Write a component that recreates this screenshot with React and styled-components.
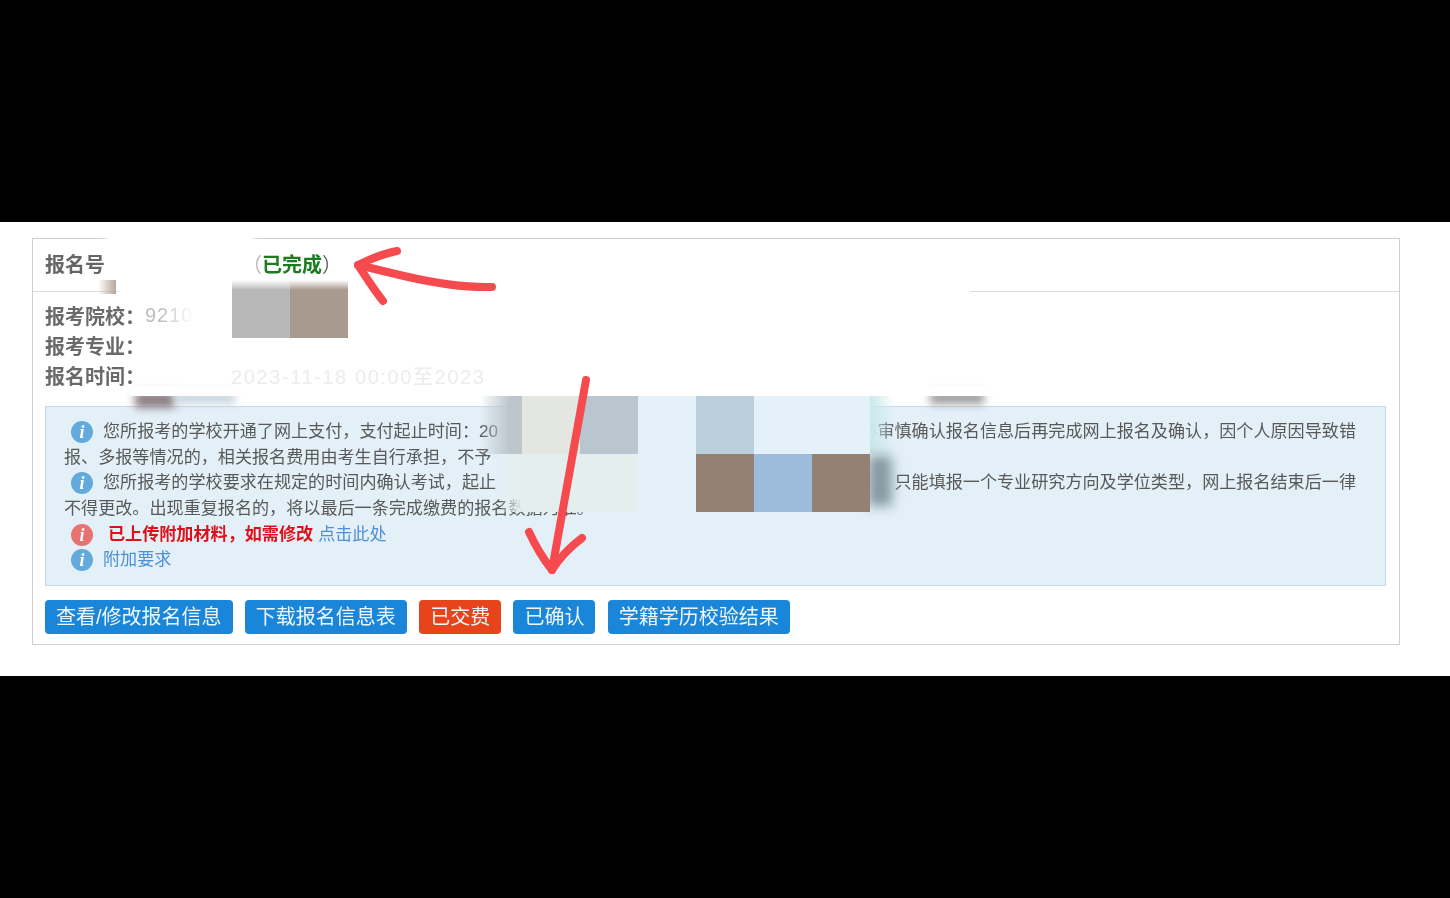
import React from 'react';
import styled, { createGlobalStyle } from 'styled-components';

const GlobalStyle = createGlobalStyle`
  html, body { margin: 0; padding: 0; background: #000; }
  body { font-family: "Liberation Sans", "Noto Sans CJK SC", sans-serif; }
`;

const Page = styled.div`
  width: 1450px;
  height: 898px;
  overflow: hidden;
  background: #000;
  display: flex;
  flex-direction: column;
  justify-content: center;
`;

const Sheet = styled.div`
  position: relative;
  height: 454px;
  background: #fff;
  padding: 16px 50px 0 32px;
  box-sizing: border-box;
  overflow: hidden;
`;

const Panel = styled.section`
  height: 407px;
  box-sizing: border-box;
  border: 1px solid #cfcfcf;
  filter: blur(0.35px);
`;

const Header = styled.header`
  height: 52px;
  box-sizing: border-box;
  padding: 0 12px 4px;
  display: flex;
  align-items: center;
  justify-content: space-between;
  width: 321px;
  font-size: 20px;
  font-weight: 700;
  color: #666;
`;

const HeaderRule = styled.div`
  height: 1px;
  background: #dcdcdc;
`;

const Done = styled.span`
  color: #b5b5b5;
  font-weight: 400;
  b { color: #1b7d1f; font-weight: 700; }
  em { color: #666; font-style: normal; }
`;

const Body = styled.div`
  padding: 8px 13px 0 12px;
`;

const Meta = styled.div`
  display: flex;
  height: 30px;
  align-items: center;
  font-size: 20px;
  font-weight: 700;
  color: #6a6a6a;
`;

const MetaValue = styled.span`
  font-weight: 400;
  color: #bdbdbd;
  letter-spacing: 1px;
  mask-image: linear-gradient(to right, #000 30%, transparent);
`;

const FaintValue = styled.span`
  margin-left: 86px;
  font-weight: 400;
  color: #ececec;
  letter-spacing: 1.6px;
`;

const Notice = styled.div`
  margin-top: 16px;
  height: 180px;
  box-sizing: border-box;
  padding: 12px 29px 0 18px;
  background: #e3f0f7;
  border: 1px solid #bfdde8;
  font-size: 17.1px;
  line-height: 25.7px;
  color: #595959;
`;

const Line = styled.div`
  display: flex;
  align-items: center;
  justify-content: space-between;
  white-space: nowrap;
  height: 25.7px;
`;

const Lead = styled.span`
  display: flex;
  align-items: center;
  padding-left: 7px;
`;

const InfoIcon = styled.i`
  width: 22px;
  height: 22px;
  margin-right: ${p => p.$gap || 10}px;
  border-radius: 50%;
  background: ${p => (p.$danger ? '#e87272' : '#62aadb')};
  color: #fff;
  font: italic 700 18px/22px "Liberation Serif", serif;
  text-align: center;
`;

const Fading = styled.span`
  opacity: 0.35;
`;

const Warning = styled.strong`
  color: #e0101a;
  font-weight: 700;
  margin-right: 5px;
`;

const TextLink = styled.a`
  color: #4f8fd6;
`;

const Actions = styled.div`
  margin-top: 14px;
  display: flex;
  gap: 12.3px;
`;

const Button = styled.button`
  height: 34px;
  padding: 0 11px 4px;
  border: 0;
  border-radius: 4px;
  background: ${p => (p.$paid ? '#e8441c' : '#1a86d9')};
  color: #eef6fc;
  font-family: inherit;
  font-size: 20px;
  white-space: nowrap;
`;

/* redaction patches lying over the screenshot */
const Patch = styled.div`
  position: absolute;
  left: ${p => p.$x}px;
  top: ${p => p.$y}px;
  width: ${p => p.$w}px;
  height: ${p => p.$h}px;
  background: ${p => p.$c || '#fff'};
  filter: ${p => (p.$blur ? `blur(${p.$blur}px)` : 'none')};
`;

const Mosaic = styled.div`
  position: absolute;
  left: ${p => p.$x}px;
  top: ${p => p.$y}px;
  display: grid;
  grid-template-columns: repeat(${p => p.$cols}, 58px);
  grid-auto-rows: 58px;
`;

const Cell = styled.div`
  background: ${p => p.$c};
`;

const Strokes = styled.svg`
  position: absolute;
  left: 0;
  top: 0;
  width: 1450px;
  height: 454px;
`;

const HEAD_CELLS = ['#b9b8b8', '#a99a90'];

const MAIN_CELLS = [
  '#e4e6e2', '#b9c6d0', '#e3f0f7', '#bccfdc', '#e4f1f8', '#e4f1f8',
  '#e4eeec', '#e4eeec', 'transparent', '#958074', '#9dbcdc', '#958074',
];

const App = () => (
  <Page>
    <GlobalStyle />
    <Sheet>
      <Panel>
        <Header>
          <span>报名号</span>
          <Done>（<b>已完成</b><em>）</em></Done>
        </Header>
        <HeaderRule />
        <Body>
          <Meta>报考院校：<MetaValue>9210</MetaValue></Meta>
          <Meta>报考专业：</Meta>
          <Meta>报名时间：<FaintValue>2023-11-18 00:00至2023</FaintValue></Meta>
          <Notice>
            <Line>
              <Lead><InfoIcon>i</InfoIcon>您所报考的学校开通了网上支付，支付起止时间：20</Lead>
              <span><Fading>必</Fading>审慎确认报名信息后再完成网上报名及确认，因个人原因导致错</span>
            </Line>
            <Line>
              <span>报、多报等情况的，相关报名费用由考生自行承担，不予</span>
            </Line>
            <Line>
              <Lead><InfoIcon>i</InfoIcon>您所报考的学校要求在规定的时间内确认考试，起止</Lead>
              <span>只能填报一个专业研究方向及学位类型，网上报名结束后一律</span>
            </Line>
            <Line>
              <span>不得更改。出现重复报名的，将以最后一条完成缴费的报名数据为准。</span>
            </Line>
            <Line>
              <Lead>
                <InfoIcon $danger $gap={15}>i</InfoIcon>
                <Warning>已上传附加材料，如需修改</Warning>
                <TextLink>点击此处</TextLink>
              </Lead>
            </Line>
            <Line>
              <Lead><InfoIcon>i</InfoIcon><TextLink>附加要求</TextLink></Lead>
            </Line>
          </Notice>
          <Actions>
            <Button>查看/修改报名信息</Button>
            <Button>下载报名信息表</Button>
            <Button $paid>已交费</Button>
            <Button>已确认</Button>
            <Button>学籍学历校验结果</Button>
          </Actions>
        </Body>
      </Panel>

      <Patch $x={135} $y={170} $w={40} $h={16} $c="#8d7f86" $blur={4} />
      <Patch $x={175} $y={170} $w={60} $h={12} $c="#c7d5df" $blur={4} />
      <Patch $x={930} $y={170} $w={54} $h={12} $c="#9a9a9a" $blur={4} />
      <Patch $x={130} $y={164} $w={860} $h={10} />
      <Patch $x={106} $y={10} $w={148} $h={48} $blur={2} />
      <Patch $x={118} $y={62} $w={852} $h={12} $blur={1} />
      <Patch $x={98} $y={58} $w={18} $h={14} $c="linear-gradient(to right, transparent, #b5a79c)" />
      <Mosaic $x={232} $y={58} $cols={2}>
        {HEAD_CELLS.map((c, i) => <Cell key={i} $c={c} />)}
      </Mosaic>
      <Patch $x={232} $y={58} $w={116} $h={10} $c="linear-gradient(#fff, transparent)" />

      <Patch $x={480} $y={174} $w={42} $h={58} $c="linear-gradient(to right, transparent, #bcc6cc 70%)" />
      <Patch $x={498} $y={232} $w={24} $h={58} $c="linear-gradient(to right, transparent, #e4eeec)" />
      <Patch $x={870} $y={174} $w={24} $h={58} $c="linear-gradient(to right, #c9e8ea, transparent)" />
      <Patch $x={868} $y={234} $w={24} $h={50} $c="#869aa3" $blur={6} />
      <Mosaic $x={522} $y={174} $cols={6}>
        {MAIN_CELLS.map((c, i) => <Cell key={i} $c={c} />)}
      </Mosaic>

      <Strokes viewBox="0 0 1450 454" fill="none" stroke="#f54a4e" strokeWidth="8" strokeLinecap="round" strokeLinejoin="round">
        <path d="M492 65 C462 66 430 60 404 54 L358 43" />
        <path d="M397 29 C382 32 368 38 358 43 C366 55 374 68 383 79" />
        <path d="M586 158 C574 225 562 295 552 348" />
        <path d="M529 310 C536 325 544 338 552 348 C560 335 570 325 582 316" />
      </Strokes>
    </Sheet>
  </Page>
);

export default App;
